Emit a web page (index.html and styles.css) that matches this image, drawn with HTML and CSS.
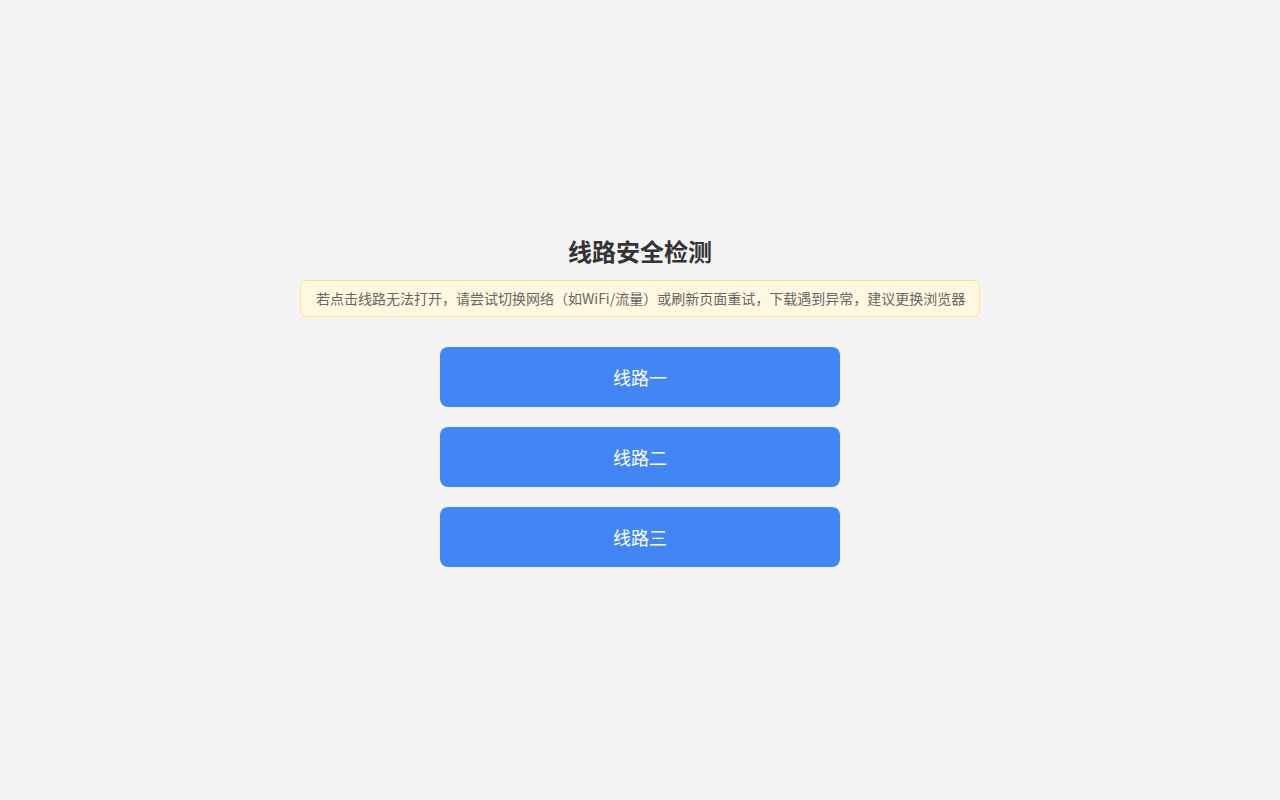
FILE: index.html
```html
<!DOCTYPE html>
<html lang="zh-CN">
<head>
<meta charset="utf-8">
<title>线路安全检测</title>
<link rel="stylesheet" href="styles.css">
</head>
<body>
<main class="page">
  <h1 class="title">线路安全检测</h1>
  <div class="notice">若点击线路无法打开，请尝试切换网络（如WiFi/流量）或刷新页面重试，下载遇到异常，建议更换浏览器</div>
  <div class="lines">
    <a class="line-btn" href="#">线路一</a>
    <a class="line-btn" href="#">线路二</a>
    <a class="line-btn" href="#">线路三</a>
  </div>
</main>
</body>
</html>
```
FILE: styles.css
```css
html, body {
  margin: 0;
  padding: 0;
}
body {
  background: #f4f4f4;
  font-family: "Microsoft YaHei", "Noto Sans CJK SC", "Liberation Sans", sans-serif;
  color: #333;
}
.page {
  min-height: 100vh;
  display: flex;
  flex-direction: column;
  align-items: center;
  justify-content: center;
  box-sizing: border-box;
}
.title {
  margin: 0 0 12px;
  font-size: 24px;
  line-height: 34px;
  font-weight: bold;
  color: #333;
}
.notice {
  width: 680px;
  box-sizing: border-box;
  padding: 7px 15px;
  background: #fff8e1;
  border: 1px solid #ffe08c;
  border-radius: 6px;
  font-size: 14px;
  line-height: 21px;
  color: #666;
  text-align: center;
  white-space: nowrap;
}
.lines {
  margin-top: 30px;
  display: flex;
  flex-direction: column;
  gap: 20px;
}
.line-btn {
  display: flex;
  align-items: center;
  justify-content: center;
  width: 400px;
  height: 60px;
  background: #4285f4;
  color: #fff;
  border-radius: 8px;
  text-decoration: none;
  font-size: 18px;
}
```
